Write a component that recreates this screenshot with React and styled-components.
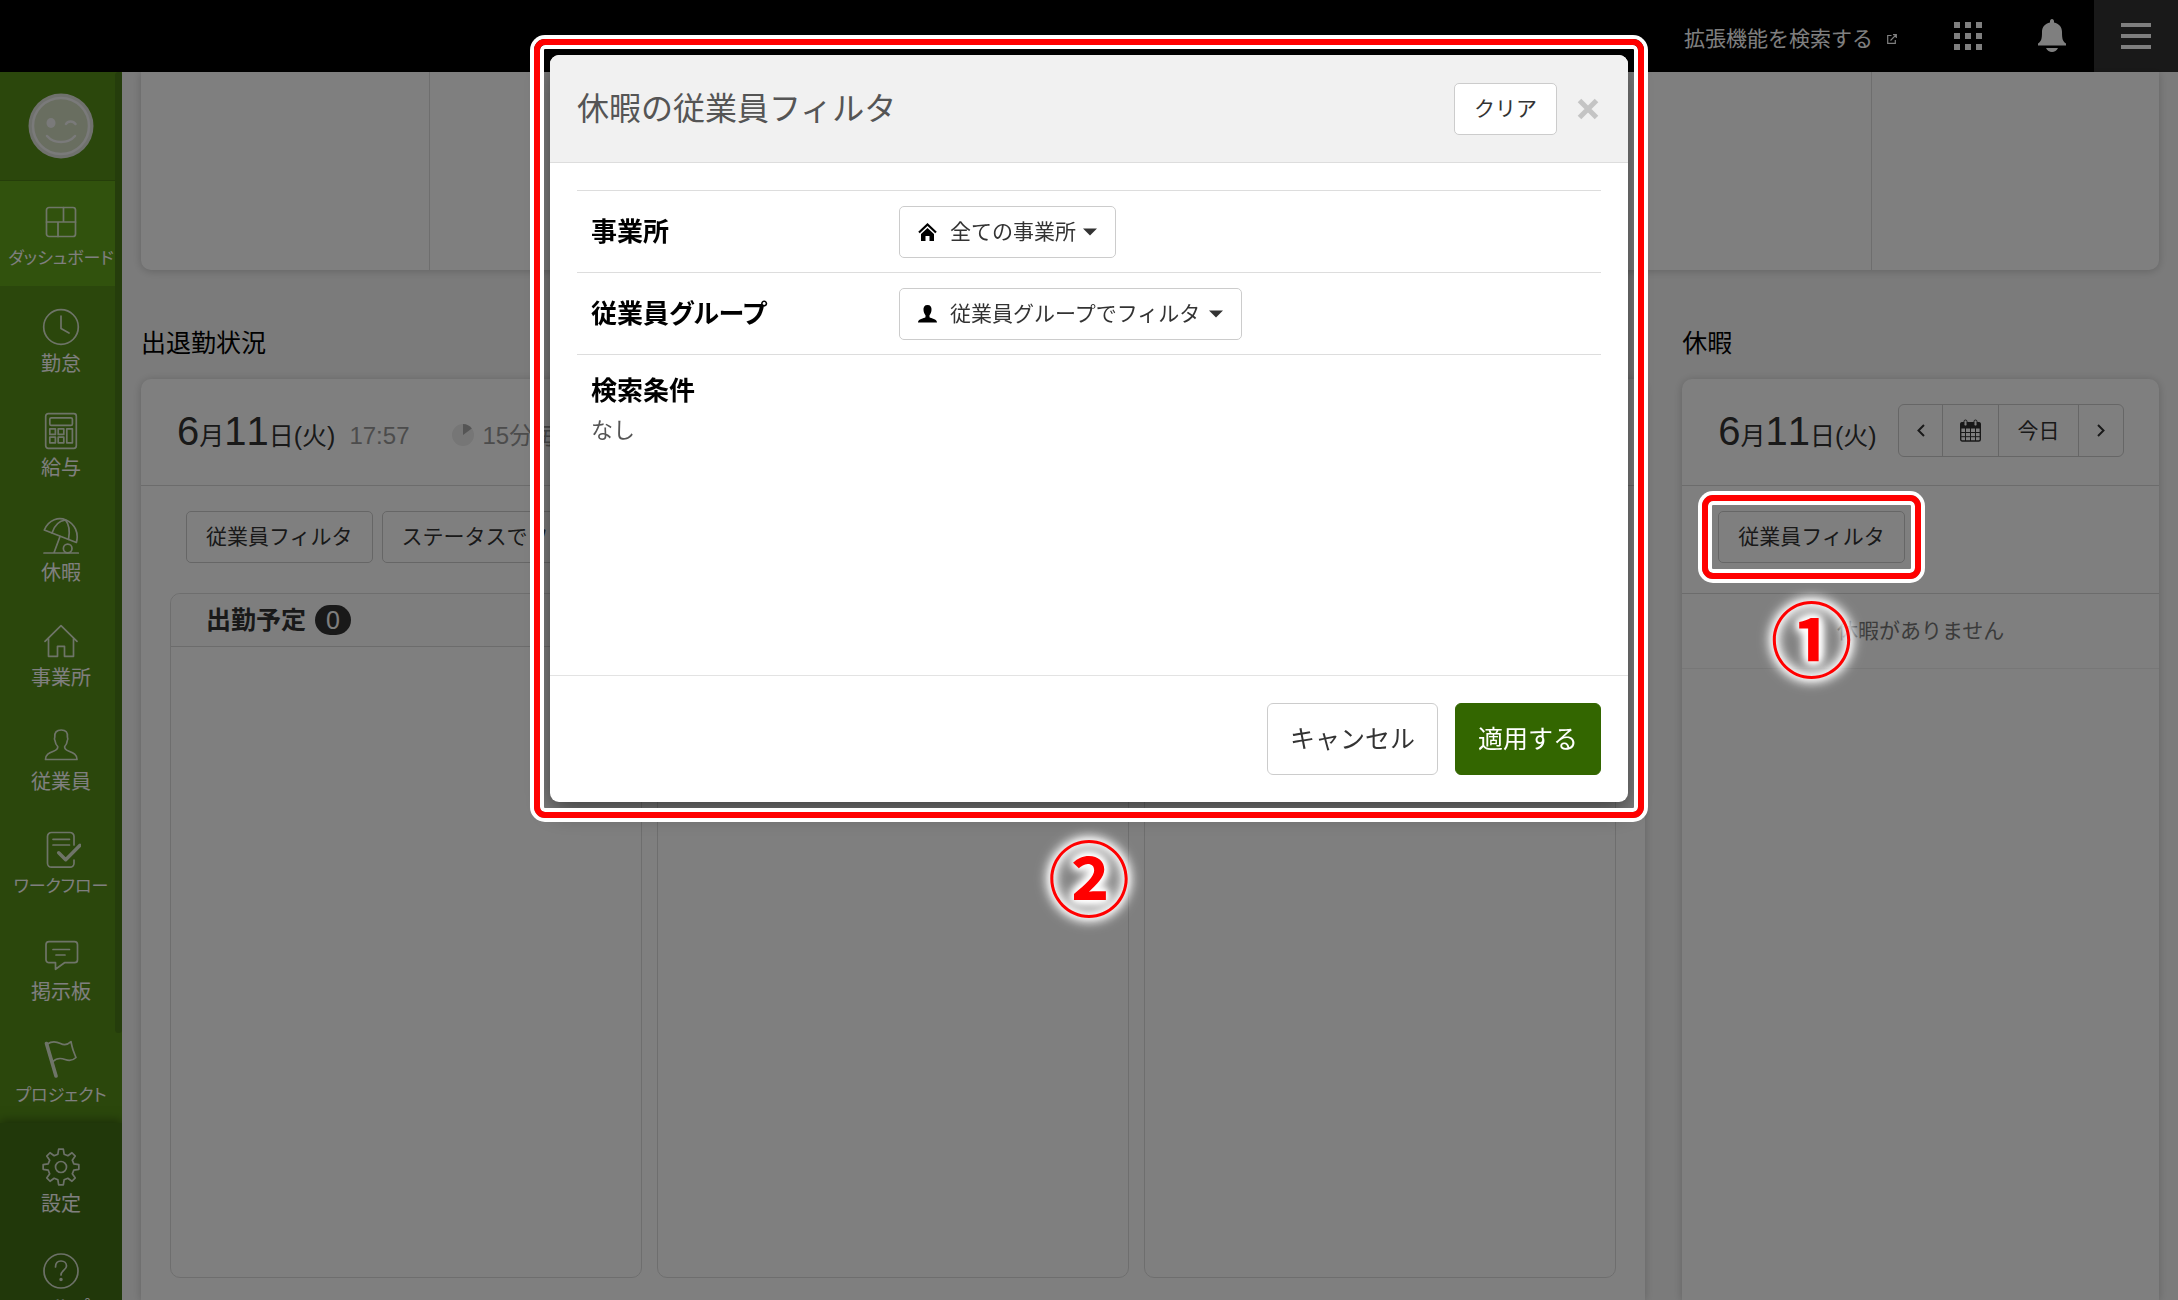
import React from "react";
import styled, { createGlobalStyle, css } from "styled-components";

const GlobalStyle = createGlobalStyle`
  *, *::before, *::after { box-sizing: border-box; }
  body {
    margin: 0;
    background: #f7f7f7;
    color: #333;
    font-family: "Liberation Sans", "Noto Sans CJK JP", sans-serif;
    font-size: 21px;
    line-height: 30px;
  }
  button, select { font: inherit; color: inherit; }
  h1, h2, h3, p, ul { margin: 0; padding: 0; font-weight: 400; }
  a { color: inherit; text-decoration: none; }
`;

/* ---------- page frame ---------- */

const Shell = styled.div`
  display: flex;
  flex-direction: column;
  height: 100vh;
  overflow: hidden;
`;

const TopBar = styled.header`
  flex: none;
  display: flex;
  align-items: stretch;
  justify-content: flex-end;
  height: 72px;
  background: #000;
  color: #fff;
`;

const SearchLink = styled.a`
  display: flex;
  align-items: center;
  gap: 14px;
  padding-top: 5px;
  margin-right: 29px;
`;

const IconButton = styled.button`
  display: grid;
  place-items: center;
  width: 84px;
  padding: 0;
  border: 0;
  color: #fff;
  background: ${(p) => (p.$raised ? "#333" : "transparent")};
`;

const Columns = styled.div`
  flex: 1;
  display: flex;
  min-height: 0;
`;

/* ---------- side navigation ---------- */

const Sidebar = styled.nav`
  position: relative;
  flex: none;
  display: flex;
  flex-direction: column;
  width: 122px;
  overflow: hidden;
  background: #568e18;
  color: #fff;

  &::after {
    content: "";
    position: absolute;
    top: 0;
    right: 0;
    width: 7px;
    height: 961px;
    border-radius: 4px;
    background: #4a7a18;
  }
`;

const Profile = styled.a`
  display: grid;
  place-items: center;
  height: 109px;
  border-bottom: 1px solid #4b7d14;
`;

const NavList = styled.ul`
  display: flex;
  flex-direction: column;
  list-style: none;
  ${(p) =>
    p.$footer
      ? css`
          flex: none;
          height: 177px;
          padding-top: 3px;
          background: #427014;
          box-shadow: 0 -2px 10px #34570f;
        `
      : css`
          flex: 1;
          min-height: 0;
        `}
`;

const NavItem = styled.li`
  ${(p) => (p.$fixed ? "flex: none; height: 104px;" : "flex: 1;")}
  background: ${(p) => (p.$active ? "#62a41a" : "transparent")};
`;

const NavLink = styled.a`
  display: flex;
  flex-direction: column;
  align-items: center;
  gap: 3px;
  padding-top: 21px;
  font-size: ${(p) => (p.$long ? 17 : 20)}px;
  line-height: 28px;
  white-space: nowrap;
  font-feature-settings: "palt";

  svg { opacity: 0.8; }
`;

/* ---------- main area ---------- */

const Main = styled.main`
  flex: 1;
  display: flex;
  flex-direction: column;
  min-width: 0;
  padding: 0 19px;
`;

const Card = styled.section`
  background: #fff;
  border-radius: ${(p) => (p.$end ? "0 0 10px 10px" : "10px 10px 0 0")};
  box-shadow: 0 1px 10px rgba(0, 0, 0, 0.2);
`;

const Summary = styled(Card)`
  flex: none;
  display: grid;
  grid-template-columns: repeat(7, 1fr);
  height: 198px;
`;

const SummaryCell = styled.div`
  & + & { border-left: 1px solid #ddd; }
`;

const Boards = styled.div`
  flex: 1;
  display: grid;
  grid-template-columns: repeat(4, 1fr);
  gap: 37px;
  min-height: 0;
  padding-top: 55px;
`;

const Board = styled.div`
  grid-column: span ${(p) => p.$span};
  display: flex;
  flex-direction: column;
  min-width: 0;
`;

const BoardTitle = styled.h2`
  padding-bottom: 18px;
  color: #000;
  font-size: 25px;
  line-height: 36px;
`;

const Panel = styled(Card)`
  flex: 1;
  display: flex;
  flex-direction: column;
`;

const PanelHead = styled.div`
  display: flex;
  align-items: center;
  height: 107px;
  padding: 0 35px 3px 36px;
  border-bottom: 1px solid #d8d8d8;
  white-space: nowrap;
`;

const DateText = styled.p`
  padding-top: 6px;
  font-size: 25px;
  font-kerning: none;
  line-height: 48px;

  b { font-size: 40px; font-weight: 400; }
`;

const Muted = styled.span`
  margin-left: ${(p) => p.$gap}px;
  padding-top: 11px;
  color: #999;
  font-size: 24px;
`;

const Pie = styled.svg`
  margin: 8px 0 0 43px;
`;

const Group = styled.div`
  display: flex;
  margin-left: auto;
  border: 1px solid #ccc;
  border-radius: 6px;
`;

const GroupButton = styled.button`
  display: grid;
  place-items: center;
  width: ${(p) => p.$w}px;
  height: 51px;
  padding: 0;
  border: 0;
  background: none;

  & + & { border-left: 1px solid #ccc; }
`;

const Button = styled.button`
  height: 52px;
  padding: 0 19px;
  border: 1px solid #ccc;
  border-radius: 5px;
  background: #fff;
  white-space: nowrap;

  ${(p) =>
    p.$large &&
    css`
      height: 72px;
      padding: 0 22px;
      border-radius: 6px;
      font-size: 25px;
    `}
  ${(p) =>
    p.$primary &&
    css`
      border-color: #360;
      background: #360;
      color: #fff;
    `}
`;

const FilterRow = styled.div`
  display: flex;
  gap: 9px;
  padding: ${(p) => (p.$inset ? "25px 45px 30px" : "25px 36px 30px")};
  ${(p) => !p.$inset && "border-bottom: 1px solid #d8d8d8;"}
`;

const Lanes = styled.div`
  flex: 1;
  display: grid;
  grid-template-columns: repeat(3, 1fr);
  gap: 15px;
  padding: 0 29px 22px;
`;

const Lane = styled.div`
  border: 1px solid #ddd;
  border-radius: 10px;
`;

const LaneHead = styled.h3`
  display: flex;
  align-items: center;
  gap: 9px;
  height: 53px;
  padding-left: 35px;
  border-bottom: 1px solid #d8d8d8;
  border-radius: 10px 10px 0 0;
  background: #fcfcfc;
  font-size: 25px;
  font-weight: 700;
`;

const Count = styled.span`
  padding: 0 11px;
  border-radius: 16px;
  background: #333;
  color: #fff;
  font-weight: 400;
`;

const Empty = styled.p`
  padding: 22px 0;
  border-bottom: 1px solid #eee;
  color: #777;
  text-align: center;
`;

/* ---------- dialog ---------- */

const Backdrop = styled.div`
  position: fixed;
  inset: 0;
  z-index: 10;
  display: flex;
  justify-content: center;
  align-items: flex-start;
  padding-top: 55px;
  background: rgba(0, 0, 0, 0.5);
`;

const callout = css`
  position: relative;

  &::after {
    content: "";
    position: absolute;
    inset: -16px;
    z-index: 20;
    border: 6px solid #f00;
    border-radius: 11px;
    box-shadow: 0 0 0 4px #fff, inset 0 0 0 4px #fff;
    pointer-events: none;
  }
`;

const Callout = styled.div`
  ${callout}
`;

const Step = styled.span`
  position: absolute;
  top: 100%;
  left: 50%;
  z-index: 21;
  transform: translateX(-50%);
  margin-top: 23px;
  color: #f00;
  font-family: "Noto Sans CJK JP", sans-serif;
  font-size: 82px;
  font-weight: 700;
  line-height: 100px;
  text-shadow: 0 0 5px #fff, 0 0 8px #fff, 0 0 10px #fff, 0 0 12px #fff,
    0 0 14px #fff, 0 0 16px #fff;
`;

const Dialog = styled.div`
  ${callout}
  width: 1078px;
  max-width: calc(100% - 60px);
  border-radius: 9px;
  background: #fff;
  box-shadow: 0 8px 24px rgba(0, 0, 0, 0.5);
`;

const DialogHead = styled.header`
  display: flex;
  align-items: center;
  height: 108px;
  padding: 0 28px 0 27px;
  border-bottom: 1px solid #ddd;
  border-radius: 9px 9px 0 0;
  background: #f1f1f1;
`;

const DialogTitle = styled.h1`
  flex: 1;
  color: #555;
  font-size: 32px;
  line-height: 48px;
`;

const CloseButton = styled.button`
  display: grid;
  margin-left: 19px;
  padding: 0;
  border: 0;
  background: none;
  color: #c4c4c4;
`;

const DialogBody = styled.div`
  min-height: 512px;
  padding: 27px 27px 0;
`;

const Field = styled.div`
  display: flex;
  align-items: center;
  height: 82px;
  padding-left: 14px;
  border-top: 1px solid #ddd;
`;

const labelText = css`
  color: #000;
  font-size: 26px;
  font-weight: 700;
  font-feature-settings: "palt";
  line-height: 36px;
`;

const FieldLabel = styled.label`
  ${labelText}
  width: 308px;
`;

const SelectBox = styled.div`
  display: flex;
  align-items: center;
  height: 52px;
  padding: 0 18px;
  border: 1px solid #ccc;
  border-radius: 5px;
  color: #333;

  select {
    margin: 0 7px 0 13px;
    padding: 0;
    border: 0;
    background: none;
    appearance: none;
    height: 50px;
  }
`;

const Conditions = styled.section`
  padding: 18px 14px;
  border-top: 1px solid #ddd;

  h2 { ${labelText} }
  p { padding-top: 4px; color: #555; font-size: 22px; line-height: 36px; }
`;

const DialogFoot = styled.footer`
  display: flex;
  justify-content: flex-end;
  gap: 17px;
  padding: 27px;
  border-top: 1px solid #e3e3e3;
`;

/* ---------- drawings ---------- */

const gearPath = (() => {
  const pts = [];
  for (let i = 0; i < 8; i++) {
    const base = (i * Math.PI) / 4 - Math.PI / 2;
    [
      [-0.24, 13.2],
      [-0.13, 18],
      [0.13, 18],
      [0.24, 13.2],
    ].forEach(([da, r]) => {
      pts.push(
        `${(20 + r * Math.cos(base + da)).toFixed(2)} ${(20 + r * Math.sin(base + da)).toFixed(2)}`
      );
    });
  }
  return `M${pts.join("L")}Z`;
})();

const shapes = {
  dashboard: (
    <>
      <rect x="5.5" y="5.5" width="29" height="29" rx="2.5" />
      <path d="M5.5 20h29M22.5 5.5V20M17 20v14.5" />
    </>
  ),
  clock: (
    <>
      <circle cx="20" cy="20" r="17.3" />
      <path d="M20 9v12.5l8 4.5" />
    </>
  ),
  calculator: (
    <>
      <rect x="4.7" y="2.7" width="30.6" height="34.6" rx="2.5" />
      <rect x="8.8" y="6.8" width="22.6" height="7.6" rx="1.5" />
      <rect x="8.8" y="17.8" width="5.6" height="5.6" />
      <rect x="17.2" y="17.8" width="5.6" height="5.6" />
      <rect x="8.8" y="26.2" width="5.6" height="5.6" />
      <rect x="17.2" y="26.2" width="5.6" height="5.6" />
      <rect x="25.8" y="17.8" width="5.6" height="14" />
    </>
  ),
  umbrella: (
    <>
      <path d="M3.3 14C8 3 18 1 25 4c9 4 13 13 10.400 22.500z" />
      <path d="M11 17C13 10.500 17 5 24.500 4c4 5 4.500 12 3 19.300M19 20.500 13 36.800M3 37h34.300" />
      <circle cx="26.700" cy="32.500" r="4.300" />
    </>
  ),
  home: (
    <path d="M4 20.300 20 4.700l16 15.600M7.500 17.500v17.800h9V25.300h7v10h9V17.500" />
  ),
  person: (
    <path d="M4.500 34.500h31.500c0-5-3.500-6.500-8-8.200-3-1.200-4.800-2.300-4.300-4.800 1.800-1.700 2.300-3.500 2.500-5.500 1.200-1.500.6-3 .2-4 .4-4.500-1.400-7-6.200-7s-6.800 2.500-6.400 7c-.4 1-.8 2.500.3 4 .2 2 .8 3.800 2.600 5.500.5 2.500-1.200 3.600-4.200 4.800-4.500 1.700-8 3.200-8 8.200z" />
  ),
  workflow: (
    <>
      <path d="M33 15V6.500a4 4 0 0 0-4-4H10.500a4 4 0 0 0-4 4v26.700a4 4 0 0 0 4 4H29a4 4 0 0 0 4-4V30M12 9.300h16.500M12 15h16.500" />
      <path d="M17.700 22.700l7 7L39 15.300" strokeWidth="3.400" />
    </>
  ),
  board: (
    <path d="M8 6.700h25.500a3 3 0 0 1 3 3v15a3 3 0 0 1-3 3H23.500l-9 6.600v-6.600H8a3 3 0 0 1-3-3v-15a3 3 0 0 1 3-3zM12 14.500h16.500M15 20h9" />
  ),
  flag: (
    <>
      <path d="M5.500 4.500 15 37" strokeWidth="3.600" />
      <path d="M6.500 5c4-3 9-2.500 13-.5s7 1.500 10.500-1.800l1 4.500c.8 4 2.500 7.500 4 11.300-3.500 3.500-7 3.500-11 2s-8-2-12 2" />
    </>
  ),
  gear: (
    <>
      <path d={gearPath} />
      <circle cx="20" cy="20" r="5.500" />
    </>
  ),
  help: (
    <>
      <circle cx="20" cy="20" r="17" />
      <path d="M14.500 16c0-3.800 2.300-6 5.500-6s5.500 2 5.500 5c0 4-5.500 4.500-5.500 9" />
      <circle cx="20" cy="28.500" r=".9" fill="currentColor" />
    </>
  ),
};

const NavIcon = ({ name }) => (
  <svg
    width="40"
    height="40"
    viewBox="0 0 40 40"
    fill="none"
    stroke="currentColor"
    strokeWidth="1.7"
    strokeLinejoin="round"
    strokeLinecap="round"
    aria-hidden="true"
  >
    {shapes[name]}
  </svg>
);

const Avatar = () => (
  <svg width="66" height="66" viewBox="0 0 66 66" fill="none" aria-hidden="true">
    <circle cx="33" cy="33" r="32.500" fill="#dfe2da" />
    <circle cx="33" cy="33" r="28" fill="#d2dcc0" stroke="#f4f4f4" strokeWidth="2.500" />
    <ellipse cx="23" cy="30" rx="4.500" ry="5" fill="#f4f4f4" />
    <path
      d="M38 31c2-3.500 7-3.500 9.500 0M19 43c7 8 21 8 28 0"
      stroke="#f4f4f4"
      strokeWidth="2.500"
      strokeLinecap="round"
    />
  </svg>
);

const Caret = () => (
  <svg width="14" height="8" viewBox="0 0 14 8" aria-hidden="true">
    <path d="M0 .5h14L7 7.500z" fill="#333" />
  </svg>
);

const mainNav = [
  ["dashboard", "ダッシュボード"],
  ["clock", "勤怠"],
  ["calculator", "給与"],
  ["umbrella", "休暇"],
  ["home", "事業所"],
  ["person", "従業員"],
  ["workflow", "ワークフロー"],
  ["board", "掲示板"],
  ["flag", "プロジェクト"],
];

const footNav = [
  ["gear", "設定"],
  ["help", "ヘルプ"],
];

const Today = () => (
  <DateText>
    <b>6</b>月<b>11</b>日(火)
  </DateText>
);

export default function App() {
  return (
    <>
      <GlobalStyle />
      <Shell>
        <TopBar>
          <SearchLink href="#extensions">
            拡張機能を検索する
            <svg width="10" height="10" viewBox="0 0 10 10" fill="none" stroke="#fff" strokeWidth="1.200" aria-hidden="true">
              <path d="M4.500 1.500H.7v7.800h7.600V6M3.500 6.500 9 .8M6 .7h3.300V4" />
            </svg>
          </SearchLink>
          <IconButton aria-label="アプリ">
            <svg width="28" height="28" viewBox="0 0 28 28" fill="currentColor" aria-hidden="true">
              {[0, 11, 22].map((y) =>
                [0, 11, 22].map((x) => <rect key={`${x}-${y}`} x={x} y={y} width="6" height="6" />)
              )}
            </svg>
          </IconButton>
          <IconButton aria-label="通知">
            <svg width="28" height="34" viewBox="0 0 28 34" fill="currentColor" aria-hidden="true">
              <path d="M14 0c1.200 0 2 1 2 2.300v1.200c5 1 8 4.500 8 9.500 0 7 .8 9.500 4 11.500V26.500H0v-2c3.200-2 4-4.500 4-11.500 0-5 3-8.500 8-9.500V2.300C12 1 12.800 0 14 0zM8 29h12c-1.200 2.500-3.500 4-6 4s-4.800-1.500-6-4z" />
            </svg>
          </IconButton>
          <IconButton $raised aria-label="メニュー">
            <svg width="30" height="26" viewBox="0 0 30 26" fill="currentColor" aria-hidden="true">
              <path d="M0 0h30v4H0zM0 11h30v4H0zM0 22h30v4H0z" />
            </svg>
          </IconButton>
        </TopBar>

        <Columns>
          <Sidebar>
            <Profile href="#profile" aria-label="プロフィール">
              <Avatar />
            </Profile>
            <NavList>
              {mainNav.map(([icon, label], i) => (
                <NavItem key={icon} $active={i === 0}>
                  <NavLink href={`#${icon}`} $long={label.length > 5}>
                    <NavIcon name={icon} />
                    {label}
                  </NavLink>
                </NavItem>
              ))}
            </NavList>
            <NavList $footer>
              {footNav.map(([icon, label]) => (
                <NavItem key={icon} $fixed>
                  <NavLink href={`#${icon}`}>
                    <NavIcon name={icon} />
                    {label}
                  </NavLink>
                </NavItem>
              ))}
            </NavList>
          </Sidebar>

          <Main>
            <Summary $end>
              {Array.from({ length: 7 }, (_, i) => (
                <SummaryCell key={i} />
              ))}
            </Summary>

            <Boards>
              <Board $span={3}>
                <BoardTitle>出退勤状況</BoardTitle>
                <Panel>
                  <PanelHead>
                    <Today />
                    <Muted $gap={14}>17:57</Muted>
                    <Pie width="22" height="22" viewBox="0 0 22 22" aria-hidden="true">
                      <circle cx="11" cy="11" r="11" fill="#ececec" />
                      <path d="M11 11V0a11 11 0 0 1 8.800 4.500z" fill="#aaa" />
                    </Pie>
                    <Muted $gap={8}>15分毎</Muted>
                  </PanelHead>
                  <FilterRow $inset>
                    <Button>従業員フィルタ</Button>
                    <Button>ステータスでフ</Button>
                  </FilterRow>
                  <Lanes>
                    <Lane>
                      <LaneHead>
                        出勤予定<Count>0</Count>
                      </LaneHead>
                    </Lane>
                    <Lane />
                    <Lane />
                  </Lanes>
                </Panel>
              </Board>

              <Board $span={1}>
                <BoardTitle>休暇</BoardTitle>
                <Panel>
                  <PanelHead>
                    <Today />
                    <Group>
                      <GroupButton $w={43} aria-label="前の日">
                        <svg width="8" height="13" viewBox="0 0 8 13" fill="none" stroke="#333" strokeWidth="2" aria-hidden="true">
                          <path d="M7 1 1.500 6.500 7 12" />
                        </svg>
                      </GroupButton>
                      <GroupButton $w={56} aria-label="カレンダー">
                        <svg width="21" height="23" viewBox="0 0 21 23" fill="none" stroke="#333" aria-hidden="true">
                          <rect x=".7" y="3.700" width="19.600" height="18.300" rx="1.500" strokeWidth="1.400" />
                          <path d="M1 4h19v5H1z" fill="#333" />
                          <path d="M5.500 9v13M10.500 9v13M15.500 9v13M1 13.500h19M1 17.700h19" />
                          <rect x="4" y="1" width="3" height="6" rx="1.500" fill="#fff" />
                          <rect x="14" y="1" width="3" height="6" rx="1.500" fill="#fff" />
                        </svg>
                      </GroupButton>
                      <GroupButton $w={80}>今日</GroupButton>
                      <GroupButton $w={45} aria-label="次の日">
                        <svg width="8" height="13" viewBox="0 0 8 13" fill="none" stroke="#333" strokeWidth="2" aria-hidden="true">
                          <path d="M1 1l5.500 5.500L1 12" />
                        </svg>
                      </GroupButton>
                    </Group>
                  </PanelHead>
                  <FilterRow>
                    <Callout>
                      <Button>従業員フィルタ</Button>
                      <Step>①</Step>
                    </Callout>
                  </FilterRow>
                  <Empty>休暇がありません</Empty>
                </Panel>
              </Board>
            </Boards>
          </Main>
        </Columns>
      </Shell>

      <Backdrop>
        <Dialog role="dialog" aria-modal="true" aria-labelledby="dialog-title">
          <DialogHead>
            <DialogTitle id="dialog-title">休暇の従業員フィルタ</DialogTitle>
            <Button>クリア</Button>
            <CloseButton aria-label="閉じる">
              <svg width="24" height="24" viewBox="0 0 24 24" fill="none" stroke="currentColor" strokeWidth="5" aria-hidden="true">
                <path d="M3.500 3.500l17 17M20.500 3.500l-17 17" />
              </svg>
            </CloseButton>
          </DialogHead>
          <DialogBody>
            <Field>
              <FieldLabel htmlFor="office">事業所</FieldLabel>
              <SelectBox>
                <svg width="19" height="18" viewBox="0 0 19 18" aria-hidden="true">
                  <path d="M1 9.500 9.500 1.500 18 9.500" fill="none" stroke="#000" strokeWidth="2.200" />
                  <path d="M9.500 5 16 11v7h-4.500v-5h-4v5H3v-7z" fill="#000" />
                </svg>
                <select id="office">
                  <option>全ての事業所</option>
                </select>
                <Caret />
              </SelectBox>
            </Field>
            <Field>
              <FieldLabel htmlFor="group">従業員グループ</FieldLabel>
              <SelectBox>
                <svg width="19" height="18" viewBox="0 0 19 18" aria-hidden="true">
                  <path d="M9.500 0c3 0 4.300 2 4 5-.2 2.500-1 4-2 5.200v2c1.500 1.300 7.500 1.300 7.500 5.300H0c0-4 6-4 7.500-5.300v-2c-1-1.200-1.800-2.700-2-5.200-.3-3 1-5 4-5z" fill="#000" />
                </svg>
                <select id="group">
                  <option>従業員グループでフィルタ</option>
                </select>
                <Caret />
              </SelectBox>
            </Field>
            <Conditions>
              <h2>検索条件</h2>
              <p>なし</p>
            </Conditions>
          </DialogBody>
          <DialogFoot>
            <Button $large>キャンセル</Button>
            <Button $large $primary>適用する</Button>
          </DialogFoot>
          <Step>②</Step>
        </Dialog>
      </Backdrop>
    </>
  );
}
